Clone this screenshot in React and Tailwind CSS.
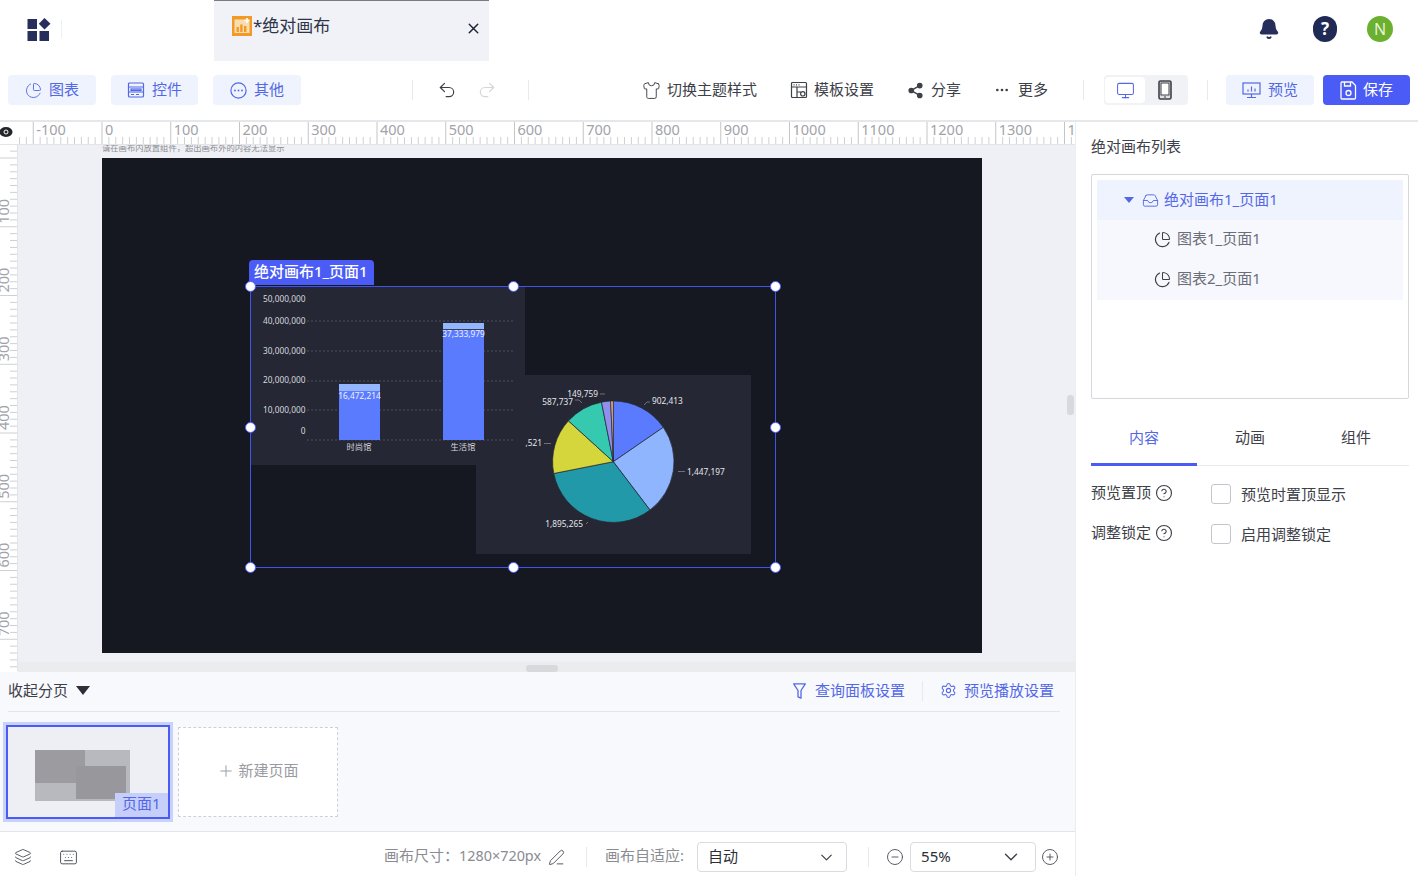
import React from "react";
import { ChartPie, Undo2, Redo2, Shirt, Monitor, Settings, Layers, Keyboard, PenLine, CircleMinus, CirclePlus, ChevronDown, CircleHelp, Bell, Inbox, X, Plus, Share2, Ellipsis } from "lucide-react";

const Logo = () => (
  <svg width="24" height="23" viewBox="0 0 24 23" className="shrink-0">
    <rect x="0.5" y="1" width="9.5" height="10" fill="#262f5c" />
    <path d="M17.5 0 L23.5 5.8 L17.5 11.5 L11.8 5.8 Z" fill="#262f5c" />
    <rect x="0.5" y="13" width="9.5" height="10" fill="#262f5c" />
    <rect x="12.5" y="13" width="9.5" height="10" fill="#262f5c" />
  </svg>
);

const TabIcon = () => (
  <svg width="20" height="20" viewBox="0 0 20 20" className="shrink-0">
    <rect width="20" height="20" fill="#f39a26" />
    <rect x="2.5" y="3.5" width="15" height="13.5" fill="#f8ddb0" />
    <rect x="4.5" y="11" width="2.4" height="5" fill="#f39a26" />
    <rect x="8.2" y="8.5" width="2.4" height="7.5" fill="#f39a26" />
    <rect x="12" y="10" width="2.4" height="6" fill="#f39a26" />
    <path d="M15 2v5M12.5 4.5h5" stroke="#fff" strokeWidth="1.6" />
  </svg>
);

const WidgetIcon = ({ size = 18 }) => (
  <svg width={size} height={size} viewBox="0 0 18 18" fill="none" stroke="currentColor" strokeWidth="1.2" className="shrink-0">
    <rect x="1.5" y="2" width="15" height="14" rx="1" />
    <path d="M1.5 6h15M1.5 11h15" />
    <rect x="4" y="8" width="10" height="1.5" />
    <path d="M4 13.5h3M9 13.5h3" />
  </svg>
);

const OtherIcon = () => (
  <svg width="17" height="17" viewBox="0 0 17 17" fill="none" stroke="currentColor" strokeWidth="1.2" className="shrink-0">
    <circle cx="8.5" cy="8.5" r="7.6" />
    <circle cx="5" cy="8.5" r="0.9" fill="currentColor" stroke="none" />
    <circle cx="8.5" cy="8.5" r="0.9" fill="currentColor" stroke="none" />
    <circle cx="12" cy="8.5" r="0.9" fill="currentColor" stroke="none" />
  </svg>
);

const TemplateIcon = () => (
  <svg width="18" height="18" viewBox="0 0 18 18" fill="none" stroke="#3d4048" strokeWidth="1.2" className="shrink-0">
    <rect x="1.5" y="1.5" width="15" height="15" rx="1" />
    <path d="M1.5 6h15M7 6v10.5M7 11h4" />
    <path d="M3.5 3.8h1M6 3.8h1M8.5 3.8h1" />
    <circle cx="12.8" cy="12.8" r="2.2" />
  </svg>
);

const PhoneIcon = () => (
  <svg width="14" height="20" viewBox="0 0 14 20" fill="none" stroke="#3d4048" className="shrink-0">
    <rect x="1" y="1" width="12" height="18" rx="1.5" strokeWidth="1.6" fill="#dfe0e4" />
    <rect x="3" y="3" width="8" height="12" fill="#fff" strokeWidth="1" />
    <path d="M6 17h2" strokeWidth="1.2" />
  </svg>
);

const PreviewIcon = () => (
  <svg width="19" height="18" viewBox="0 0 19 18" fill="none" stroke="currentColor" strokeWidth="1.2" className="shrink-0">
    <rect x="1" y="2" width="17" height="11" />
    <path d="M9.5 13v3M5 16.5h9" />
    <path d="M6 10.5v-2M9.5 10.5v-5M13 10.5v-3" />
  </svg>
);

const SaveIcon = () => (
  <svg width="17" height="19" viewBox="0 0 17 19" fill="none" stroke="currentColor" strokeWidth="1.3" className="shrink-0">
    <path d="M2 1h10l3.500 3.500V17a1 1 0 0 1-1 1H2a1 1 0 0 1-1-1V2a1 1 0 0 1 1-1Z" />
    <path d="M4.500 1v4h6V1" />
    <circle cx="8.500" cy="12" r="2.500" />
  </svg>
);

const FunnelIcon = () => (
  <svg width="13" height="16" viewBox="0 0 13 16" fill="none" stroke="#5468e6" strokeWidth="1.3" className="shrink-0">
    <path d="M0.700 0.800H12.300L8 7.500V15.200L5 13.800V7.500Z" strokeLinejoin="round" />
  </svg>
);

const ToolBtn = ({ icon, label, className }) => (
  <div className={"h-[30px] flex items-center justify-center gap-[7px] bg-[#eef3fd] rounded-sm text-[15px] text-[#5468e6] " + className}>
    {icon}
    <span className="-mt-[2px]">{label}</span>
  </div>
);

const VLine = ({ className }) => <div className={"w-px h-5 bg-[#e8e9ec] shrink-0 " + className} />;

const HRuler = () => {
  const ticks = [];
  for (let i = -14; i <= 141; i++) {
    const x = 102 + i * 6.875;
    const major = i % 10 === 0;
    ticks.push(<line key={i} x1={x} x2={x} y1={major ? 0 : 15} y2={22} stroke={major ? "#c4c5c9" : "#cfd0d3"} strokeWidth="1" />);
  }
  const labels = [];
  for (let v = -100; v <= 1400; v += 100) {
    labels.push(<text key={v} x={102 + v * 0.6875 + 3} y={13} fontSize="14.5" fill="#a2a3a8">{v}</text>);
  }
  return (
    <svg width="1075" height="23" className="block border-b border-[#e3e4e8] shrink-0">
      <rect x="18" width="1057" height="23" fill="#fff" />
      {ticks}
      {labels}
      <rect x="0" width="18" height="23" fill="#fff" />
      <ellipse cx="6" cy="10" rx="6.500" ry="5" fill="#23252b" />
      <circle cx="6" cy="10" r="2" fill="none" stroke="#fff" strokeWidth="1" />
    </svg>
  );
};

const VRuler = () => {
  const ticks = [];
  for (let i = -1; i <= 76; i++) {
    const y = 13 + i * 6.875;
    const major = i % 10 === 0;
    ticks.push(<line key={i} x1={major ? 0 : 10} x2={17} y1={y} y2={y} stroke="#cfd0d3" strokeWidth="1" />);
  }
  const labels = [];
  for (let v = 100; v <= 700; v += 100) {
    const y = 13 + v * 0.6875 - 3;
    labels.push(<text key={v} x={0} y={0} transform={`translate(9 ${y}) rotate(-90)`} fontSize="14.5" fill="#a2a3a8">{v}</text>);
  }
  return (
    <svg width="18" height="526" className="block bg-white shrink-0 border-r border-[#e3e4e8]">
      {ticks}
      {labels}
    </svg>
  );
};

const BarChart = () => {
  const grid = [34, 64, 94, 123, 153];
  const axis = [["50,000,000", 12], ["40,000,000", 34], ["30,000,000", 64], ["20,000,000", 93], ["10,000,000", 123], ["0", 144]];
  return (
    <svg width="275" height="178" className="block">
      <rect width="275" height="178" fill="#252734" />
      {grid.map((y) => <line key={y} x1="57" x2="265" y1={y} y2={y} stroke="#4c505c" strokeDasharray="2 2" />)}
      {axis.map(([t, y]) => <text key={t} x="55.500" y={y + 3} textAnchor="end" fontSize="8.300" fill="#d5d7df">{t}</text>)}
      <rect x="89" y="97" width="41" height="56" fill="#5b7bff" />
      <rect x="89" y="97" width="41" height="7" fill="#94b5ff" />
      <rect x="193" y="36" width="41" height="117" fill="#5b7bff" />
      <rect x="193" y="36" width="41" height="6" fill="#94b5ff" />
      <rect x="193" y="42" width="41" height="1" fill="#3a3d4c" />
      <text x="109.500" y="112" textAnchor="middle" fontSize="8.300" fill="#eef1ff">16,472,214</text>
      <text x="213.500" y="50" textAnchor="middle" fontSize="8.300" fill="#eef1ff">37,333,979</text>
      <text x="109" y="163" textAnchor="middle" fontSize="8.300" fill="#d5d7df">时尚馆</text>
      <text x="213" y="163" textAnchor="middle" fontSize="8.300" fill="#d5d7df">生活馆</text>
    </svg>
  );
};

const sectors = [
  [0, 55.5, "#5b7bff"],
  [55.5, 142.8, "#8fb5ff"],
  [142.8, 258.8, "#2199a8"],
  [258.8, 312.3, "#d4d63c"],
  [312.3, 348.8, "#35c9b0"],
  [348.8, 357.5, "#8f8fee"],
  [357.5, 360, "#e0b090"],
];
const pt = (cx, cy, r, a) => {
  const t = (a * Math.PI) / 180;
  return [cx + r * Math.sin(t), cy - r * Math.cos(t)];
};
const PieChart = () => {
  const cx = 137.3, cy = 86.7, r = 60.7;
  const labels = [
    ["902,413", 176, 26, "start"],
    ["1,447,197", 211, 96.500, "start"],
    ["1,895,265", 107, 149, "end"],
    ["587,737", 97, 27, "end"],
    ["149,759", 122, 19, "end"],
    [",521", 66, 68, "end"],
  ];
  return (
    <svg width="275" height="179" className="block">
      <rect width="275" height="179" fill="#252734" />
      {sectors.map(([a, b, c]) => {
        const [x1, y1] = pt(cx, cy, r, a);
        const [x2, y2] = pt(cx, cy, r, b);
        return <path key={a} d={`M${cx} ${cy} L${x1} ${y1} A${r} ${r} 0 ${b - a > 180 ? 1 : 0} 1 ${x2} ${y2} Z`} fill={c} stroke="#252734" strokeWidth="0.7" />;
      })}
      {labels.map(([t, x, y, an]) => <text key={t} x={x} y={y + 3} textAnchor={an} fontSize="8.300" fill="#e4e6ec">{t}</text>)}
      <path d="M168 30 L171 27 H174 M202 96.500 H209 M110 149 L112 147 M99 25 H103 L106 28 M124 19 H129 M68 68.500 H75" fill="none" stroke="#8c8f9b" strokeWidth="0.7" />
    </svg>
  );
};

const Handle = ({ className }) => (
  <div className={"absolute w-[11px] h-[11px] -ml-[5.5px] -mt-[5.5px] rounded-full bg-white border border-[#4a5cf5] " + className} />
);

const Artboard = () => (
  <div className="relative w-[880px] h-[495px] bg-[#161821] shrink-0">
    <div className="absolute left-[374px] top-[217px]"><PieChart /></div>
    <div className="absolute left-[148px] top-[129px]"><BarChart /></div>
    <div className="absolute left-[148px] top-[128px] w-[526px] h-[282px] border border-[#3f55ea]" />
    <div className="absolute left-[147px] top-[102px] w-[125px] h-[25px] bg-[#4a5cf5] rounded-t-sm text-white text-[15px] font-medium leading-[23px] pl-[5px] whitespace-nowrap">绝对画布1_页面1</div>
    <Handle className="left-[148px] top-[128px]" />
    <Handle className="left-[411px] top-[128px]" />
    <Handle className="left-[673px] top-[128px]" />
    <Handle className="left-[148px] top-[269px]" />
    <Handle className="left-[673px] top-[269px]" />
    <Handle className="left-[148px] top-[409px]" />
    <Handle className="left-[411px] top-[409px]" />
    <Handle className="left-[673px] top-[409px]" />
  </div>
);

const TreeRow = ({ label, bg }) => (
  <div className={"h-10 flex items-center pl-[57px] pb-[1px] gap-[6px] text-[15px] text-[#6b6e76] " + bg}>
    <ChartPie size={17} strokeWidth={1.5} className="text-[#3d4048]" />
    <span className="-mt-[2px]">{label}</span>
  </div>
);

const FormRow = ({ label, text }) => (
  <div className="flex items-center h-10">
    <div className="w-[120px] flex items-center gap-[4px] text-[15px] text-[#3d4048] -mt-[2px]">
      <span className="-mt-[2px]">{label}</span>
      <CircleHelp size={18} strokeWidth={1.5} />
    </div>
    <div className="w-5 h-5 border border-[#c4c6cc] rounded-[3px] bg-white shrink-0" />
    <span className="ml-[10px] text-[15px] text-[#3d4048]">{text}</span>
  </div>
);

const Field = ({ text, className, size }) => (
  <div className={"h-[30px] border border-[#d9dbe0] bg-white rounded-sm flex items-center justify-between text-[15px] text-[#2c2f36] " + className}>
    <span className="-mt-[1px]">{text}</span>
    <ChevronDown size={size} strokeWidth={1.5} className="text-[#3d4048]" />
  </div>
);

export default function App() {
  return (
    <div className="w-[1418px] h-[876px] overflow-hidden bg-white flex flex-col font-['Noto_Sans','Noto_Sans_CJK_SC',sans-serif]">
      {/* header */}
      <div className="h-[61px] flex items-stretch shrink-0">
        <div className="pl-[27px] pt-[18px] w-[214px] flex items-start gap-[10px] shrink-0">
          <Logo />
          <div className="w-px h-[18px] bg-[#eeeff1] mt-[2px]" />
        </div>
        <div className="w-[275px] bg-[#f0f2f7] border-t border-[#7a7c82] flex items-start pl-[18px] pr-[7px] pt-[15px] shrink-0">
          <TabIcon />
          <span className="text-[17px] leading-[19px] text-[#2e3448] ml-[1px]">*绝对画布</span>
          <X size={17} strokeWidth={2} className="ml-auto mt-[4px] text-[#1f2433]" />
        </div>
        <div className="flex-1 flex items-start justify-end pr-[25px] pt-[16px]">
          <Bell size={22} fill="#262f5c" stroke="#262f5c" className="mt-[2px] mr-[33px]" />
          <div className="w-6 h-[26px] rounded-full bg-[#1f2a55] text-white text-[17px] font-bold flex items-center justify-center mr-[30px]">?</div>
          <div className="w-[26px] h-[26px] rounded-full bg-[#6bb02e] text-[#e6f3d8] text-[16px] flex items-center justify-center">N</div>
        </div>
      </div>

      {/* toolbar */}
      <div className="h-[61px] border-b-2 border-[#e6e7ea] shrink-0 flex items-center pb-[1px]">
        <ToolBtn className="w-[88px] ml-[8px]" icon={<ChartPie size={17} strokeWidth={1.3} />} label="图表" />
        <ToolBtn className="w-[87px] ml-[15px]" icon={<WidgetIcon />} label="控件" />
        <ToolBtn className="w-[88px] ml-[15px]" icon={<OtherIcon />} label="其他" />
        <VLine className="ml-[111px]" />
        <Undo2 size={20} strokeWidth={1.4} className="ml-[24px] text-[#3d4048]" />
        <Redo2 size={20} strokeWidth={1.4} className="ml-[20px] text-[#d5d6da]" />
        <VLine className="ml-[31px]" />
        <div className="ml-[113px] flex items-center gap-[6px] text-[15px] text-[#3d4048]">
          <Shirt size={19} strokeWidth={1.2} />
          <span className="-mt-[2px]">切换主题样式</span>
        </div>
        <div className="ml-[33px] flex items-center gap-[6px] text-[15px] text-[#3d4048]">
          <TemplateIcon />
          <span className="-mt-[2px]">模板设置</span>
        </div>
        <div className="ml-[33px] flex items-center gap-[7px] text-[15px] text-[#3d4048]">
          <Share2 size={17} strokeWidth={2} fill="#3d4048" />
          <span className="-mt-[2px]">分享</span>
        </div>
        <div className="ml-[33px] flex items-center gap-[8px] text-[15px] text-[#3d4048]">
          <Ellipsis size={16} strokeWidth={2} />
          <span className="-mt-[2px]">更多</span>
        </div>
        <VLine className="ml-[35px]" />
        <div className="ml-[20px] w-[84px] h-[30px] bg-[#f0f2f6] rounded-sm flex items-center p-[1px]">
          <div className="w-[40px] h-[26px] bg-white flex items-center justify-center text-[#5468e6] rounded-sm">
            <Monitor size={19} strokeWidth={1.3} />
          </div>
          <div className="w-[40px] flex items-center justify-center">
            <PhoneIcon />
          </div>
        </div>
        <VLine className="ml-[19px]" />
        <ToolBtn className="w-[88px] ml-[18px]" icon={<PreviewIcon />} label="预览" />
        <div className="ml-[9px] w-[87px] h-[30px] bg-[#4a5cf5] rounded-sm flex items-center justify-center gap-[6px] text-white text-[15px]">
          <SaveIcon />
          <span className="-mt-[2px]">保存</span>
        </div>
      </div>

      {/* main */}
      <div className="flex-1 flex min-h-0">
        <div className="w-[1075px] flex flex-col shrink-0">
          <div className="h-[550px] flex flex-col shrink-0 overflow-hidden">
            <HRuler />
            <div className="flex-1 flex min-h-0">
              <VRuler />
              <div className="flex-1 flex flex-col bg-[#eff0f5] relative overflow-hidden">
                <div className="flex-1 pl-[84px]">
                  <div className="h-[13px] text-[8.3px] leading-[5px] text-[#8b8c92] whitespace-nowrap overflow-hidden">请在画布内放置组件，超出画布外的内容无法显示</div>
                  <Artboard />
                </div>
                <div className="h-[10px] bg-[#ebecee] flex justify-center shrink-0">
                  <div className="w-[32px] h-[7px] mt-[3px] rounded-[3px] bg-[#d8d9dc] ml-[-10px]" />
                </div>
                <div className="absolute right-[1px] top-[250px] w-[7px] h-[20px] rounded-[3px] bg-[#d8d9dc]" />
              </div>
            </div>
          </div>

          {/* pages */}
          <div className="h-[160px] bg-[#f7f9fd] border-b border-[#e4e5e9] shrink-0 flex flex-col">
            <div className="h-[40px] ml-[8px] mr-[15px] border-b border-[#e4e5e9] flex items-center shrink-0 pb-[2px]">
              <span className="text-[15px] text-[#3d4048]">收起分页</span>
              <svg width="14" height="9" viewBox="0 0 14 9" className="ml-[8px]"><path d="M0 0H14L7 9Z" fill="#2c2f36" /></svg>
              <span className="ml-auto"><FunnelIcon /></span>
              <span className="ml-[9px] text-[15px] text-[#5468e6]">查询面板设置</span>
              <div className="w-px h-5 bg-[#e8e9ec] mx-[17px]" />
              <Settings size={17} strokeWidth={1.5} className="text-[#5468e6]" />
              <span className="ml-[7px] mr-[6px] text-[15px] text-[#5468e6]">预览播放设置</span>
            </div>
            <div className="flex items-center pl-[3px] pt-[10px]">
              <div className="w-[170px] h-[100px] border-[3px] border-[#c9d2fb] shrink-0">
                <div className="relative w-full h-full border-2 border-[#4a5cf5] bg-[#eeeff4] overflow-hidden">
                  <div className="absolute left-[27px] top-[23px] w-[95px] h-[51px] bg-[#b8b9be]" />
                  <div className="absolute left-[27px] top-[23px] w-[50px] h-[33px] bg-[#9c9ca0]" />
                  <div className="absolute left-[68px] top-[39px] w-[50px] h-[33px] bg-[#98989c]" />
                  <div className="absolute right-0 bottom-0 w-[53px] h-[24px] bg-[#c6cefa] text-[#5468e6] text-[15px] leading-[21px] pl-[7px]">页面1</div>
                </div>
              </div>
              <div className="ml-[5px] w-[160px] h-[90px] bg-white border border-dashed border-[#cfd0d4] flex items-center justify-center gap-[3px] text-[15px] text-[#9a9ba0] shrink-0 pb-[3px]">
                <Plus size={18} strokeWidth={1.3} />
                <span>新建页面</span>
              </div>
            </div>
          </div>

          {/* status */}
          <div className="flex-1 flex items-center text-[15px] text-[#8a8c92] pt-[6px]">
            <Layers size={18} strokeWidth={1.2} className="ml-[14px] text-[#4a4d55]" />
            <Keyboard size={19} strokeWidth={1.2} className="ml-[27px] text-[#4a4d55]" />
            <span className="ml-[306px] -mt-[3px]">画布尺寸：</span>
            <span className="text-[14.4px] -mt-[3px]">1280×720px</span>
            <PenLine size={17} strokeWidth={1.3} className="ml-[7px] text-[#4a4d55]" />
            <div className="w-px h-5 bg-[#e8e9ec] ml-[21px]" />
            <span className="ml-[18px] -mt-[3px]">画布自适应:</span>
            <Field text="自动" size={19} className="ml-[13px] w-[150px] pl-[10px] pr-[10px]" />
            <div className="w-px h-5 bg-[#e8e9ec] ml-[21px]" />
            <CircleMinus size={18} strokeWidth={1.2} className="ml-[17px] text-[#4a4d55]" />
            <Field text="55%" size={22} className="ml-[6px] w-[126px] pl-[10px] pr-[13px]" />
            <CirclePlus size={18} strokeWidth={1.2} className="ml-[5px] text-[#4a4d55]" />
          </div>
        </div>

        {/* right panel */}
        <div className="flex-1 border-l border-[#eceded] pl-[15px] pr-[9px] flex flex-col min-w-0">
          <div className="h-[52px] pb-[4px] flex items-center text-[15px] text-[#3d4048] shrink-0">绝对画布列表</div>
          <div className="h-[225px] border border-[#d5d7dc] rounded-[2px] p-[5px] shrink-0">
            <div className="h-10 bg-[#eef3fd] flex items-center pl-[27px] text-[15px] text-[#5468e6]">
              <svg width="10" height="6" viewBox="0 0 10 6" className="mr-[8px]"><path d="M0 0H10L5 6Z" fill="#5468e6" /></svg>
              <Inbox size={17} strokeWidth={1.3} />
              <span className="ml-[5px] -mt-[2px]">绝对画布1_页面1</span>
            </div>
            <TreeRow label="图表1_页面1" bg="bg-[#f6f8fe]" />
            <TreeRow label="图表2_页面1" bg="bg-[#f6f8fe]" />
          </div>
          <div className="mt-[20px] h-[47px] flex border-b border-[#e8e9ec] shrink-0">
            <div className="w-[106px] flex justify-center pt-[7px] text-[15px] text-[#5468e6] border-b-[3px] border-[#4a5cf5] -mb-px">内容</div>
            <div className="w-[106px] flex justify-center pt-[7px] text-[15px] text-[#3d4048]">动画</div>
            <div className="w-[106px] flex justify-center pt-[7px] text-[15px] text-[#3d4048]">组件</div>
          </div>
          <div className="mt-[8px]">
            <FormRow label="预览置顶" text="预览时置顶显示" />
            <FormRow label="调整锁定" text="启用调整锁定" />
          </div>
        </div>
      </div>
    </div>
  );
}
